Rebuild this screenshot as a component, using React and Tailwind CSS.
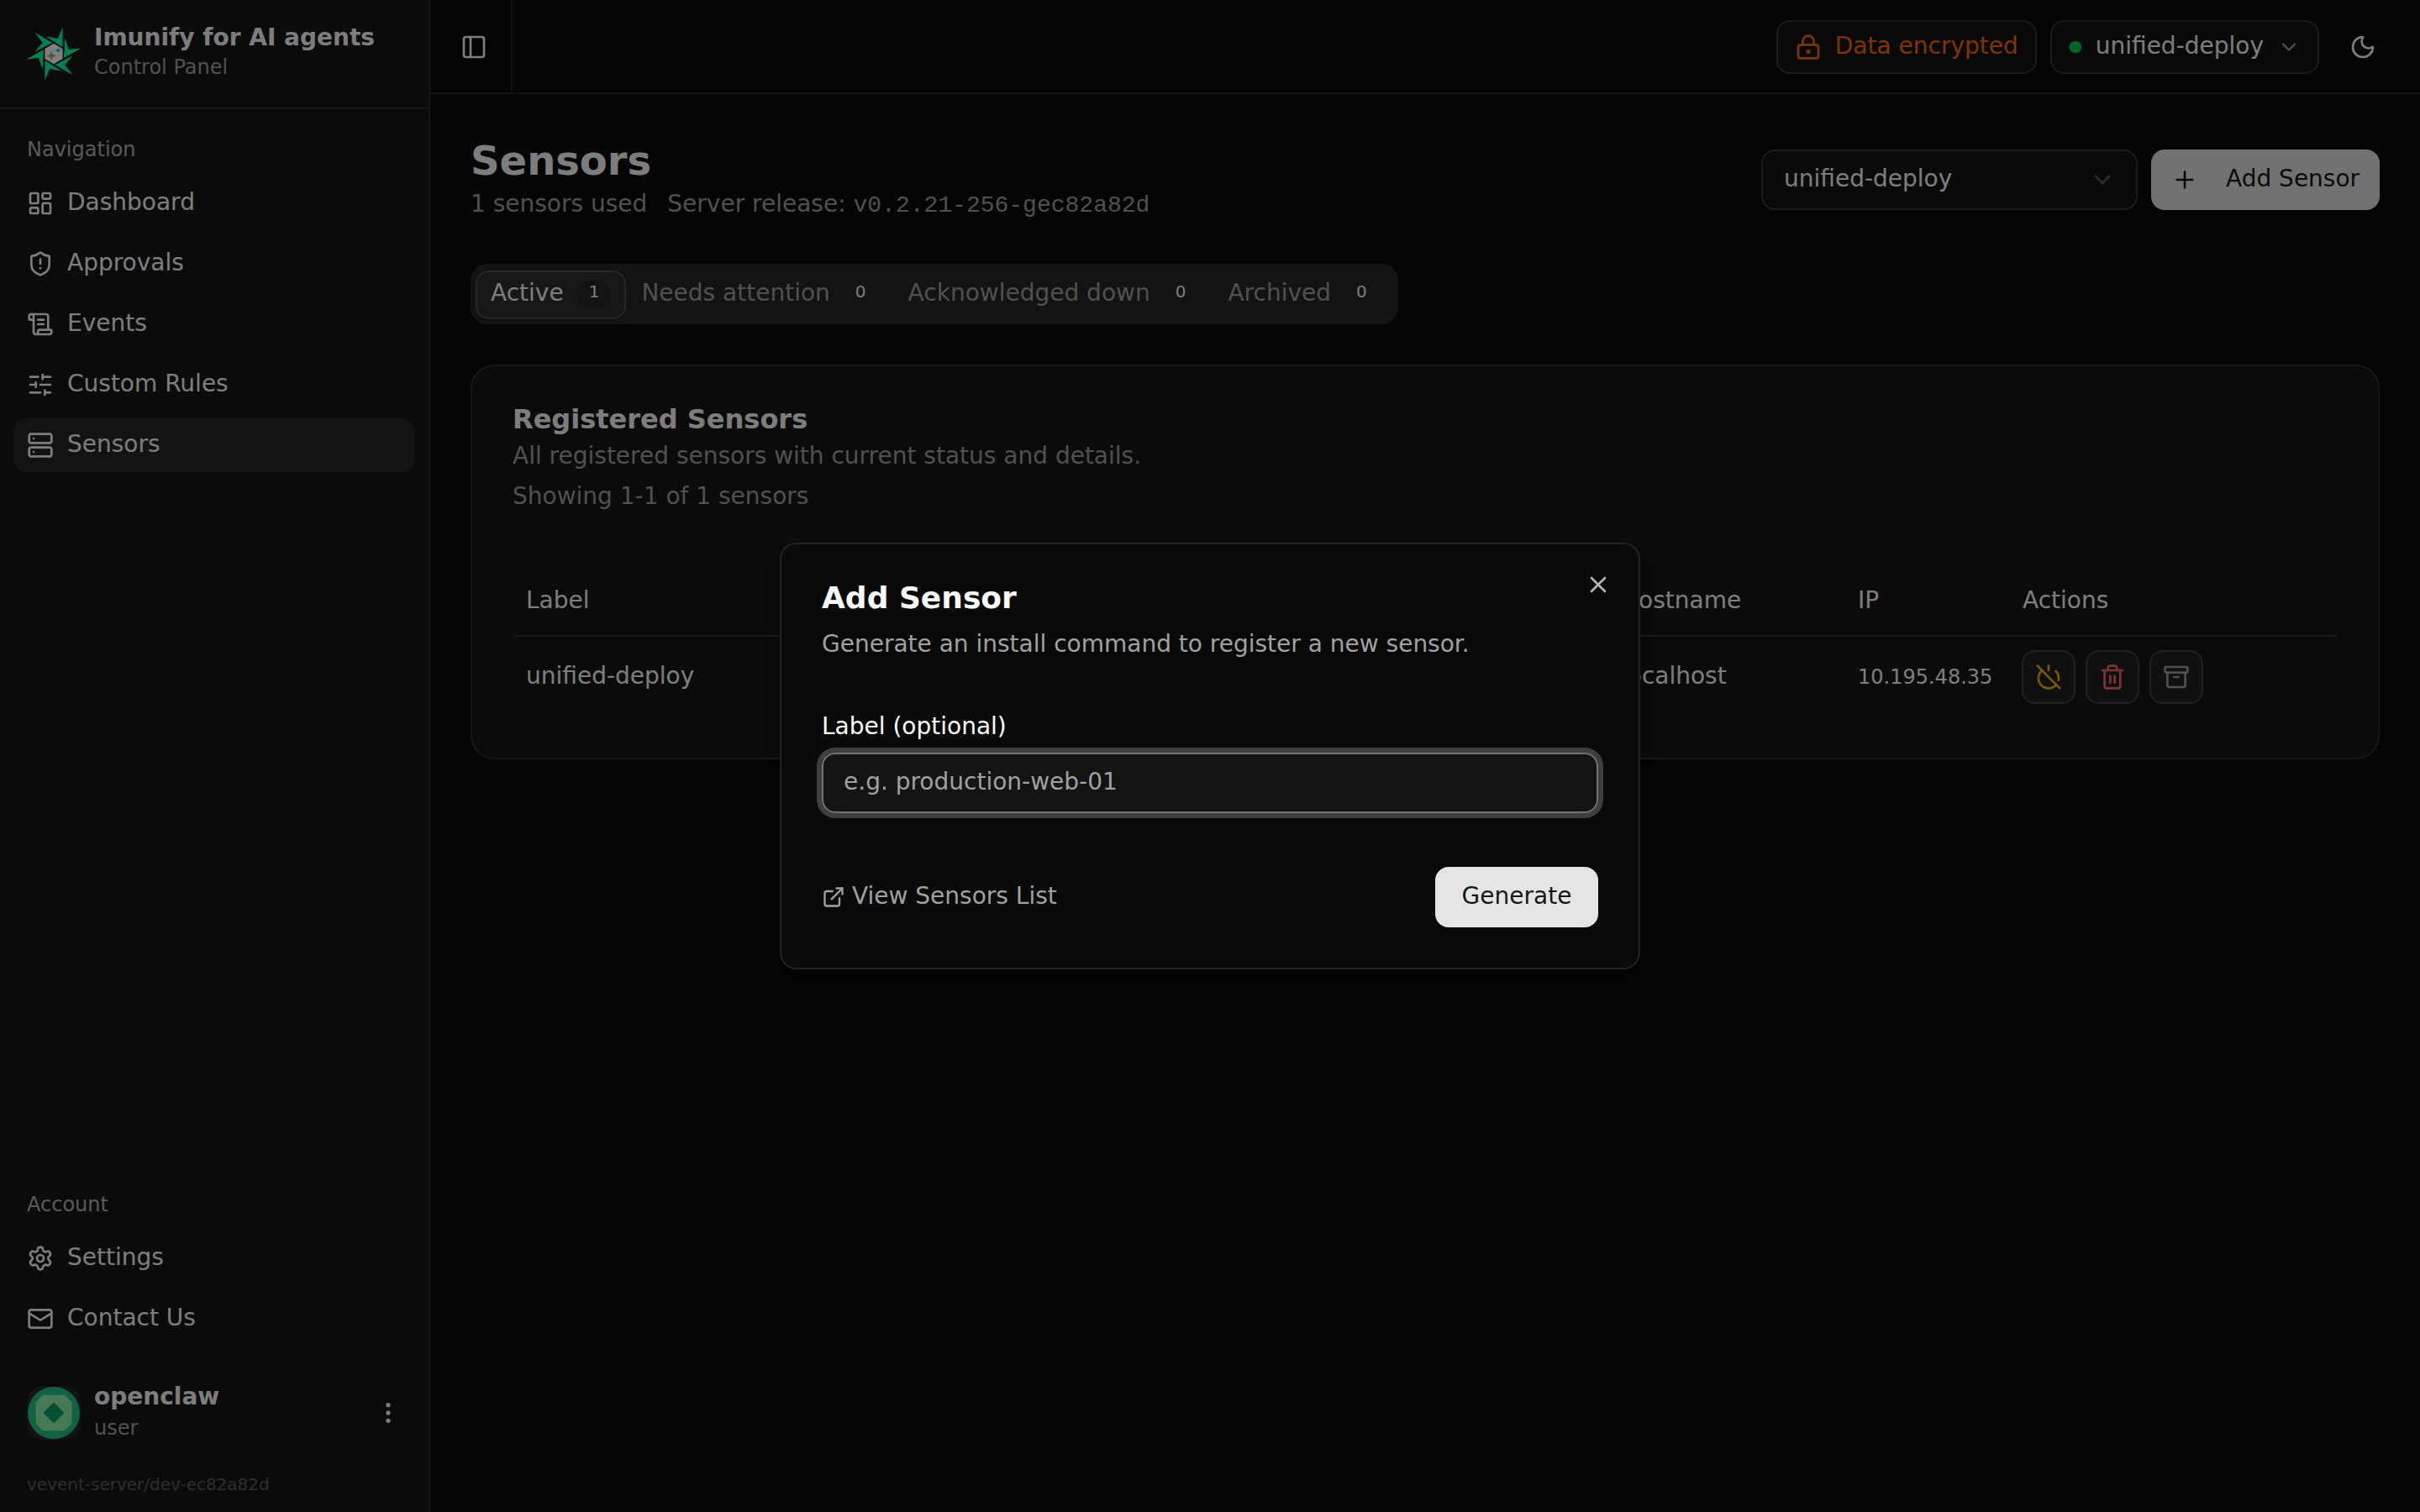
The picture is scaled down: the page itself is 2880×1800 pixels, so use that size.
import {
  Archive,
  ChevronDown,
  EllipsisVertical,
  ExternalLink,
  LayoutDashboard,
  LockKeyhole,
  Mail,
  Moon,
  PanelLeft,
  Plus,
  PowerOff,
  ScrollText,
  Server,
  Settings,
  ShieldAlert,
  SlidersHorizontal,
  Trash2,
  X,
} from "lucide-react";

const navItems = [
  { label: "Dashboard", icon: LayoutDashboard },
  { label: "Approvals", icon: ShieldAlert },
  { label: "Events", icon: ScrollText },
  { label: "Custom Rules", icon: SlidersHorizontal },
  { label: "Sensors", icon: Server, active: true },
];

const accountItems = [
  { label: "Settings", icon: Settings },
  { label: "Contact Us", icon: Mail },
];

const tabs = [
  { label: "Active", count: 1, active: true },
  { label: "Needs attention", count: 0 },
  { label: "Acknowledged down", count: 0 },
  { label: "Archived", count: 0 },
];

const rowActions = [
  { label: "Disable", icon: PowerOff, color: "text-[#f0b100]" },
  { label: "Delete", icon: Trash2, color: "text-[#ff6467]" },
  { label: "Archive", icon: Archive, color: "text-[#a1a1a1]" },
];

function Logo() {
  return (
    <svg viewBox="0 0 64 64" className="size-16 shrink-0">
      <defs>
        <linearGradient id="spark" x1="0" y1="1" x2="1" y2="0">
          <stop offset="0.2" stopColor="#d8b040" />
          <stop offset="0.8" stopColor="#50c890" />
        </linearGradient>
      </defs>
      {[0, 60, 120, 180, 240, 300].map((deg) => (
        <path
          key={deg}
          d="M42.7 0 L42.4 24.2 L22.7 11.3 L36.8 13.9 Z"
          fill="#00ffaa"
          transform={`rotate(${deg} 32 32)`}
        />
      ))}
      <path d="M32 19.8 L42.6 25.9 V38.1 L32 44.2 L21.4 38.1 V25.9 Z" fill="#fff" />
      <path d="M29 28 Q29.8 33.6 35 34.5 Q29.8 35.4 29 41 Q28.2 35.4 23 34.5 Q28.2 33.6 29 28 Z" fill="url(#spark)" />
      <path d="M37.3 24.6 Q37.8 27.6 40.8 28 Q37.8 28.4 37.3 31.4 Q36.8 28.4 33.8 28 Q36.8 27.6 37.3 24.6 Z" fill="#14b8c4" />
    </svg>
  );
}

function Avatar() {
  return (
    <div className="size-16 shrink-0 overflow-hidden rounded-[20px] bg-[#262626]">
      <svg viewBox="0 0 64 64" className="size-16">
        <circle cx="32" cy="32" r="31" fill="#22c584" />
        <path d="M19.2 10.7 H44.8 L53.3 19.2 V44.8 L44.8 53.3 H19.2 L10.7 44.8 V19.2 Z" fill="#8af4aa" />
        <path
          d="M32 21.5 L42.5 32 L32 42.5 L21.5 32 Z"
          fill="#0aa062"
          stroke="#0aa062"
          strokeWidth="3"
          strokeLinejoin="round"
        />
      </svg>
    </div>
  );
}

function NavGroup({ title, items }) {
  return (
    <div className="flex flex-col p-4">
      <div className="flex h-16 items-center px-4 text-2xl text-[#fafafa]/70">{title}</div>
      <div className="flex flex-col gap-2">
        {items.map(({ label, icon: Icon, active }) => (
          <a
            key={label}
            className={`flex h-16 items-center gap-4 rounded-2xl px-4 text-[28px] ${active ? "bg-[#262626]" : ""}`}
          >
            <Icon className="size-8 shrink-0" />
            <span className="-mt-0.5">{label}</span>
          </a>
        ))}
      </div>
    </div>
  );
}

function Sidebar() {
  return (
    <aside className="flex w-[512px] shrink-0 flex-col border-r-2 border-white/10 bg-[#171717] text-[#fafafa]">
      <div className="flex h-[130px] items-center gap-4 border-b-2 border-white/10 px-8">
        <Logo />
        <div className="flex flex-col pb-1.5">
          <span className="text-[28px] font-semibold leading-10">Imunify for AI agents</span>
          <span className="-mt-px mb-px text-2xl leading-8 text-[#a1a1a1]">Control Panel</span>
        </div>
      </div>

      <NavGroup title="Navigation" items={navItems} />
      <div className="flex-1" />
      <NavGroup title="Account" items={accountItems} />

      <div className="flex flex-col p-4">
        <button className="flex h-24 items-center gap-4 px-4 text-left">
          <Avatar />
          <div className="flex flex-1 flex-col pb-1.5">
            <span className="text-[28px] font-semibold leading-10">openclaw</span>
            <span className="-mb-px mt-px text-2xl leading-8 text-[#a1a1a1]">user</span>
          </div>
          <EllipsisVertical className="size-8" />
        </button>
        <p className="px-4 pb-0.5 pt-[22px] text-xl leading-[30px] text-[#a1a1a1]/50">vevent-server/dev-ec82a82d</p>
      </div>
    </aside>
  );
}

function Topbar() {
  return (
    <header className="flex h-28 shrink-0 items-center border-b-2 border-white/10 pr-8">
      <div className="flex h-full w-[98px] items-center justify-center border-r-2 border-white/10 pl-2 pt-0.5">
        <PanelLeft className="size-8" />
      </div>
      <div className="flex-1" />
      <div className="flex items-center gap-4 pt-0.5 text-[28px]">
        <div className="flex h-16 items-center gap-4 rounded-2xl border-2 border-white/15 bg-white/[0.045] px-5 text-[#ff6900] shadow-sm">
          <LockKeyhole className="size-8" />
          <span className="-mt-0.5">Data encrypted</span>
        </div>
        <div className="flex h-16 items-center gap-4 rounded-2xl border-2 border-white/15 bg-white/[0.045] px-5 shadow-sm">
          <svg viewBox="0 0 24 24" className="size-4">
            <circle cx="12" cy="12" r="11" fill="#00c950" />
          </svg>
          <span className="-mt-0.5">unified-deploy</span>
          <ChevronDown className="size-7 text-[#a1a1a1]" />
        </div>
        <div className="flex size-[72px] items-center justify-center">
          <Moon className="size-8" />
        </div>
      </div>
    </header>
  );
}

function PageHeader() {
  return (
    <div className="flex h-[108px] items-start justify-between">
      <div className="-mt-px flex flex-col">
        <h1 className="text-5xl font-bold leading-16">Sensors</h1>
        <div className="flex h-10 gap-6 text-[28px] leading-10 text-[#a1a1a1]">
          <span>1 sensors used</span>
          <span>
            Server release: <span className="font-['Liberation_Mono',monospace]">v0.2.21-256-gec82a82d</span>
          </span>
        </div>
      </div>
      <div className="mt-[18px] flex gap-4 text-[28px]">
        <div className="flex h-[72px] w-[448px] items-center justify-between rounded-2xl border-2 border-white/15 bg-white/[0.045] pl-[25px] pr-6 shadow-sm">
          <span className="-mt-0.5">unified-deploy</span>
          <ChevronDown className="size-8 text-[#a1a1a1] opacity-50" />
        </div>
        <button className="flex h-[72px] w-[272px] items-center gap-[33px] rounded-2xl bg-[#e5e5e5] pl-6 text-[#171717]">
          <Plus className="size-8 shrink-0" />
          <span className="-mt-0.5 whitespace-nowrap">Add Sensor</span>
        </button>
      </div>
    </div>
  );
}

function Tabs() {
  return (
    <div className="flex h-[72px] w-[1104px] items-end self-start rounded-[20px] bg-[#262626] p-1.5">
      {tabs.map((tab) => (
        <button
          key={tab.label}
          className={`flex h-[58px] shrink-0 items-center gap-[15px] rounded-2xl border-2 px-4 text-[28px] ${
            tab.active ? "border-white/15 bg-white/[0.045] text-[#fafafa] shadow-sm" : "border-transparent text-[#a1a1a1]"
          }`}
        >
          <span className="-mt-1">{tab.label}</span>
          <span className="-mt-0.5 flex h-8 w-[41.8px] items-center justify-center rounded-full bg-[#262626] pb-1.5 pl-px text-xl leading-none text-[#fafafa]">
            {tab.count}
          </span>
        </button>
      ))}
    </div>
  );
}

function SensorsTable() {
  return (
    <div className="mt-4 flex flex-col text-[28px]">
      <div className="grid h-[82px] grid-cols-[1303px_282px_196px_1fr] items-center border-b-2 border-white/10">
        <span className="-mt-0.5 px-4">Label</span>
        <span className="-mt-0.5 px-4">Hostname</span>
        <span className="-mt-0.5 px-4">IP</span>
        <span className="-mt-0.5 px-4">Actions</span>
      </div>
      <div className="grid h-24 grid-cols-[1303px_282px_195px_1fr] items-center">
        <span className="-mt-0.5 px-4">unified-deploy</span>
        <span className="-mt-0.5 px-4">localhost</span>
        <span className="px-4 text-2xl">10.195.48.35</span>
        <div className="flex gap-3 px-4">
          {rowActions.map(({ label, icon: Icon, color }) => (
            <button
              key={label}
              aria-label={label}
              className={`flex size-16 items-center justify-center rounded-2xl border-2 border-white/15 bg-white/[0.045] ${color}`}
            >
              <Icon className="size-8" />
            </button>
          ))}
        </div>
      </div>
    </div>
  );
}

function AddSensorDialog() {
  return (
    <div className="relative flex w-[1024px] flex-col gap-8 rounded-[20px] border-2 border-white/10 bg-[#0a0a0a] p-12 text-[28px] shadow-[0_20px_30px_-6px_rgba(0,0,0,0.1),0_8px_12px_-8px_rgba(0,0,0,0.1)]">
      <div className="flex flex-col gap-4">
        <h2 className="-mt-0.5 mb-0.5 text-4xl font-semibold leading-none">Add Sensor</h2>
        <p className="-mt-px mb-px leading-10 text-[#a1a1a1]">Generate an install command to register a new sensor.</p>
      </div>
      <div className="flex flex-col gap-4 py-8">
        <label className="-mt-px mb-px leading-none">Label (optional)</label>
        <div className="flex h-[72px] items-center rounded-2xl border-2 border-[#737373] bg-white/[0.045] px-6 text-[#a1a1a1] ring-[6px] ring-[#737373]/50">
          <span className="-mt-0.5">e.g. production-web-01</span>
        </div>
      </div>
      <div className="flex items-center justify-between">
        <a className="flex items-center gap-2 text-[#a1a1a1]">
          <ExternalLink className="size-7" />
          <span className="-mt-0.5">View Sensors List</span>
        </a>
        <button className="flex h-[72px] w-[194px] items-center justify-center rounded-2xl bg-[#e5e5e5] text-[#171717]">
          <span className="-mt-0.5">Generate</span>
        </button>
      </div>
      <button className="absolute right-8 top-8 opacity-70" aria-label="Close">
        <X className="size-8" />
      </button>
    </div>
  );
}

export default function App() {
  return (
    <div className="relative flex h-[1800px] w-[2880px] overflow-hidden bg-[#0a0a0a] font-['DejaVu_Sans',sans-serif] text-[#fafafa]">
      <Sidebar />
      <div className="flex flex-1 flex-col">
        <Topbar />
        <main className="flex flex-col p-12">
          <PageHeader />
          <div className="mt-[46px] flex flex-col gap-12">
            <Tabs />
            <section className="flex flex-col rounded-[28px] border-2 border-white/10 bg-[#171717] p-12 shadow-sm">
              <h2 className="-mt-px text-[32px] font-semibold leading-none">Registered Sensors</h2>
              <p className="mt-2 text-[28px] leading-10 text-[#a1a1a1]">
                All registered sensors with current status and details.
              </p>
              <p className="mb-[49px] mt-2 text-[28px] leading-10 text-[#a1a1a1]">Showing 1-1 of 1 sensors</p>
              <SensorsTable />
            </section>
          </div>
        </main>
      </div>

      <div className="absolute inset-0 flex items-center justify-center bg-black/50">
        <AddSensorDialog />
      </div>
    </div>
  );
}
